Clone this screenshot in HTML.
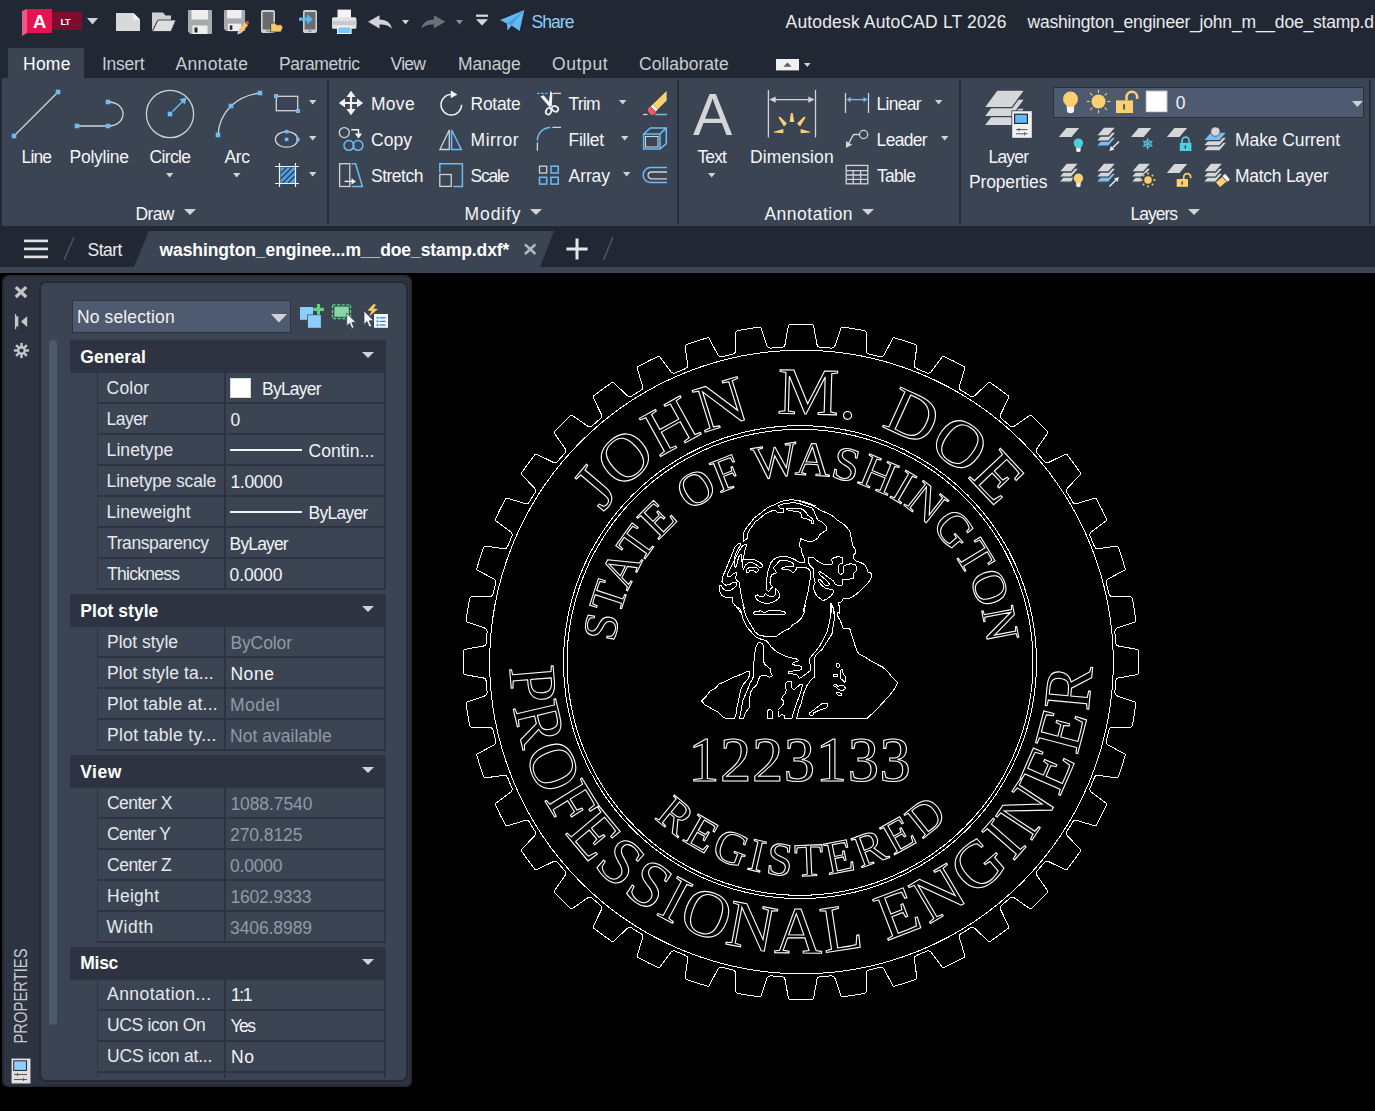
<!DOCTYPE html>
<html lang="en"><head><meta charset="utf-8"><title>Autodesk AutoCAD LT 2026 - washington_engineer_john_m__doe_stamp.dxf</title>
<style>

html,body{margin:0;padding:0;background:#000;}
body{width:1375px;height:1111px;overflow:hidden;font-family:"Liberation Sans",sans-serif;}
#app{position:relative;width:1375px;height:1111px;overflow:hidden;background:#000;}
#app div,#app svg,#app span.t{position:absolute;}
span.t{white-space:pre;line-height:1;}
svg{overflow:visible;}

</style></head>
<body>
<div id="app">
<div style="left:0px;top:0px;width:1375px;height:273px;background:#222833;"></div>
<div style="left:8px;top:48px;width:76px;height:31px;background:#3b4453;"></div>
<div style="left:2px;top:78px;width:1373px;height:148px;background:#3b4453;"></div>
<div style="left:326.5px;top:80px;width:2px;height:144px;background:#272d38;"></div>
<div style="left:676.5px;top:80px;width:2px;height:144px;background:#272d38;"></div>
<div style="left:958.5px;top:80px;width:2px;height:144px;background:#272d38;"></div>
<div style="left:1368.5px;top:80px;width:2px;height:144px;background:#272d38;"></div>
<div style="left:0px;top:267px;width:1375px;height:6px;background:#3b4453;"></div>
<div style="left:1053.4px;top:86.8px;width:309px;height:29px;background:#4e5a6f;border:1.6px solid #2a303b;"></div>
<svg style="left:0px;top:226px;" width="1375" height="41" viewBox="0 0 1375 41"><polygon points="149,5 554,5 540,41 134,41" fill="#3b4453"/><path d="M74,11 L64,34 M613,11 L603.5,34" stroke="#4a5364" stroke-width="1.6" fill="none"/></svg>
<span class="t" style="left:531.60px;top:13.79px;font-size:17.5px;color:#8fcdf8;letter-spacing:-0.971px;">Share</span>
<span class="t" style="left:785.60px;top:13.79px;font-size:17.5px;color:#e9ebee;letter-spacing:0.154px;">Autodesk AutoCAD LT 2026</span>
<span class="t" style="left:1027.54px;top:13.79px;font-size:17.5px;color:#e9ebee;letter-spacing:-0.202px;">washington_engineer_john_m__doe_stamp.d</span>
<span class="t" style="left:23.00px;top:55.79px;font-size:17.5px;color:#ffffff;letter-spacing:0.244px;">Home</span>
<span class="t" style="left:102.00px;top:55.79px;font-size:17.5px;color:#c9cdd4;letter-spacing:-0.255px;">Insert</span>
<span class="t" style="left:175.50px;top:55.79px;font-size:17.5px;color:#c9cdd4;letter-spacing:0.351px;">Annotate</span>
<span class="t" style="left:279.00px;top:55.79px;font-size:17.5px;color:#c9cdd4;letter-spacing:-0.401px;">Parametric</span>
<span class="t" style="left:390.60px;top:55.79px;font-size:17.5px;color:#c9cdd4;letter-spacing:-0.758px;">View</span>
<span class="t" style="left:458.00px;top:55.79px;font-size:17.5px;color:#c9cdd4;letter-spacing:-0.126px;">Manage</span>
<span class="t" style="left:552.00px;top:55.79px;font-size:17.5px;color:#c9cdd4;letter-spacing:0.612px;">Output</span>
<span class="t" style="left:639.00px;top:55.79px;font-size:17.5px;color:#c9cdd4;letter-spacing:0.012px;">Collaborate</span>
<span class="t" style="left:21.60px;top:149.19px;font-size:17.5px;color:#f4f5f7;letter-spacing:-0.891px;">Line</span>
<span class="t" style="left:69.60px;top:149.19px;font-size:17.5px;color:#f4f5f7;letter-spacing:-0.268px;">Polyline</span>
<span class="t" style="left:149.60px;top:149.19px;font-size:17.5px;color:#f4f5f7;letter-spacing:-0.663px;">Circle</span>
<span class="t" style="left:224.40px;top:149.19px;font-size:17.5px;color:#f4f5f7;letter-spacing:-0.325px;">Arc</span>
<span class="t" style="left:697.40px;top:149.19px;font-size:17.5px;color:#f4f5f7;letter-spacing:-0.834px;">Text</span>
<span class="t" style="left:750.00px;top:149.19px;font-size:17.5px;color:#f4f5f7;letter-spacing:0.117px;">Dimension</span>
<span class="t" style="left:988.60px;top:149.19px;font-size:17.5px;color:#f4f5f7;letter-spacing:-0.843px;">Layer</span>
<span class="t" style="left:969.00px;top:174.19px;font-size:17.5px;color:#f4f5f7;letter-spacing:-0.152px;">Properties</span>
<span class="t" style="left:371.00px;top:96.19px;font-size:17.5px;color:#f4f5f7;letter-spacing:0.275px;">Move</span>
<span class="t" style="left:371.00px;top:132.19px;font-size:17.5px;color:#f4f5f7;letter-spacing:0.047px;">Copy</span>
<span class="t" style="left:371.00px;top:168.19px;font-size:17.5px;color:#f4f5f7;letter-spacing:-0.505px;">Stretch</span>
<span class="t" style="left:470.60px;top:96.19px;font-size:17.5px;color:#f4f5f7;letter-spacing:-0.308px;">Rotate</span>
<span class="t" style="left:470.60px;top:132.19px;font-size:17.5px;color:#f4f5f7;letter-spacing:0.464px;">Mirror</span>
<span class="t" style="left:470.60px;top:168.19px;font-size:17.5px;color:#f4f5f7;letter-spacing:-1.240px;">Scale</span>
<span class="t" style="left:568.60px;top:96.19px;font-size:17.5px;color:#f4f5f7;letter-spacing:-0.778px;">Trim</span>
<span class="t" style="left:568.60px;top:132.19px;font-size:17.5px;color:#f4f5f7;letter-spacing:-0.309px;">Fillet</span>
<span class="t" style="left:568.60px;top:168.19px;font-size:17.5px;color:#f4f5f7;letter-spacing:-0.103px;">Array</span>
<span class="t" style="left:876.60px;top:96.19px;font-size:17.5px;color:#f4f5f7;letter-spacing:-0.729px;">Linear</span>
<span class="t" style="left:876.60px;top:132.19px;font-size:17.5px;color:#f4f5f7;letter-spacing:-0.698px;">Leader</span>
<span class="t" style="left:877.00px;top:168.19px;font-size:17.5px;color:#f4f5f7;letter-spacing:-0.706px;">Table</span>
<span class="t" style="left:1235.00px;top:132.19px;font-size:17.5px;color:#f4f5f7;letter-spacing:-0.092px;">Make Current</span>
<span class="t" style="left:1235.00px;top:168.19px;font-size:17.5px;color:#f4f5f7;letter-spacing:-0.269px;">Match Layer</span>
<span class="t" style="left:1175.80px;top:95.19px;font-size:17.5px;color:#f4f5f7;">0</span>
<span class="t" style="left:135.60px;top:205.79px;font-size:17.5px;color:#f4f5f7;letter-spacing:-0.698px;">Draw</span>
<span class="t" style="left:464.60px;top:205.79px;font-size:17.5px;color:#f4f5f7;letter-spacing:0.891px;">Modify</span>
<span class="t" style="left:764.40px;top:205.79px;font-size:17.5px;color:#f4f5f7;letter-spacing:0.504px;">Annotation</span>
<span class="t" style="left:1130.60px;top:205.79px;font-size:17.5px;color:#f4f5f7;letter-spacing:-1.026px;">Layers</span>
<span class="t" style="left:87.60px;top:242.19px;font-size:17.5px;color:#e9ebee;letter-spacing:-0.541px;">Start</span>
<span class="t" style="left:159.49px;top:242.19px;font-size:17.5px;color:#ffffff;letter-spacing:-0.084px;font-weight:700;">washington_enginee...m__doe_stamp.dxf*</span>
<svg style="left:87.0px;top:17.8px;" width="11" height="6.4" viewBox="0 0 11 6.4"><polygon points="0,0 11,0 5.5,6.4" fill="#d0d2d6"/></svg>
<svg style="left:166.4px;top:173.0px;" width="7.4" height="4.6" viewBox="0 0 7.4 4.6"><polygon points="0,0 7.4,0 3.7,4.6" fill="#d0d2d6"/></svg>
<svg style="left:233.3px;top:173.0px;" width="7.4" height="4.6" viewBox="0 0 7.4 4.6"><polygon points="0,0 7.4,0 3.7,4.6" fill="#d0d2d6"/></svg>
<svg style="left:708.0999999999999px;top:173.2px;" width="7.4" height="4.6" viewBox="0 0 7.4 4.6"><polygon points="0,0 7.4,0 3.7,4.6" fill="#d0d2d6"/></svg>
<svg style="left:309.0px;top:99.7px;" width="7.4" height="4.6" viewBox="0 0 7.4 4.6"><polygon points="0,0 7.4,0 3.7,4.6" fill="#d0d2d6"/></svg>
<svg style="left:309.0px;top:135.7px;" width="7.4" height="4.6" viewBox="0 0 7.4 4.6"><polygon points="0,0 7.4,0 3.7,4.6" fill="#d0d2d6"/></svg>
<svg style="left:309.0px;top:171.7px;" width="7.4" height="4.6" viewBox="0 0 7.4 4.6"><polygon points="0,0 7.4,0 3.7,4.6" fill="#d0d2d6"/></svg>
<svg style="left:619.0px;top:99.7px;" width="7.4" height="4.6" viewBox="0 0 7.4 4.6"><polygon points="0,0 7.4,0 3.7,4.6" fill="#d0d2d6"/></svg>
<svg style="left:621.0px;top:135.7px;" width="7.4" height="4.6" viewBox="0 0 7.4 4.6"><polygon points="0,0 7.4,0 3.7,4.6" fill="#d0d2d6"/></svg>
<svg style="left:623.0px;top:171.7px;" width="7.4" height="4.6" viewBox="0 0 7.4 4.6"><polygon points="0,0 7.4,0 3.7,4.6" fill="#d0d2d6"/></svg>
<svg style="left:935.0px;top:99.7px;" width="7.4" height="4.6" viewBox="0 0 7.4 4.6"><polygon points="0,0 7.4,0 3.7,4.6" fill="#d0d2d6"/></svg>
<svg style="left:941.0px;top:135.7px;" width="7.4" height="4.6" viewBox="0 0 7.4 4.6"><polygon points="0,0 7.4,0 3.7,4.6" fill="#d0d2d6"/></svg>
<svg style="left:184.0px;top:209.0px;" width="12" height="6" viewBox="0 0 12 6"><polygon points="0,0 12,0 6.0,6" fill="#d0d2d6"/></svg>
<svg style="left:530.3px;top:209.0px;" width="12" height="6" viewBox="0 0 12 6"><polygon points="0,0 12,0 6.0,6" fill="#d0d2d6"/></svg>
<svg style="left:862.2px;top:209.0px;" width="12" height="6" viewBox="0 0 12 6"><polygon points="0,0 12,0 6.0,6" fill="#d0d2d6"/></svg>
<svg style="left:1188.0px;top:209.0px;" width="12" height="6" viewBox="0 0 12 6"><polygon points="0,0 12,0 6.0,6" fill="#d0d2d6"/></svg>
<svg style="left:1351.6px;top:101.0px;" width="10.8" height="6" viewBox="0 0 10.8 6"><polygon points="0,0 10.8,0 5.4,6" fill="#d0d2d6"/></svg>
<svg style="left:402.4px;top:20.0px;" width="7" height="4.4" viewBox="0 0 7 4.4"><polygon points="0,0 7,0 3.5,4.4" fill="#d0d2d6"/></svg>
<svg style="left:456.2px;top:20.0px;" width="7" height="4.4" viewBox="0 0 7 4.4"><polygon points="0,0 7,0 3.5,4.4" fill="#8b8f98"/></svg>
<svg style="left:804.4000000000001px;top:63.0px;" width="6.6" height="4" viewBox="0 0 6.6 4"><polygon points="0,0 6.6,0 3.3,4" fill="#d0d2d6"/></svg>
<svg style="left:0px;top:0px;" width="1375" height="275" viewBox="0 0 1375 275"><polygon points="22,11 27,9 27,33 22,36" fill="#ea5a86"/><rect x="27" y="9" width="25" height="24" fill="#e5134f"/><rect x="52" y="12" width="30" height="18" fill="#7d0d2e"/><polygon points="116,13 133.5,13 140,19.5 140,31 116,31" fill="#d9d9d9"/><polygon points="133.5,13 140,19.5 133.5,19.5" fill="#f4f4f4"/><polygon points="152,12.5 163,12.5 165.5,15.5 171,15.5 171,21 157,21 152,31.5" fill="#cfcfcf"/><polygon points="158,20 176,20 171,31.5 152.3,31.5" fill="#dedede" stroke="#222833" stroke-width="0.8"/><g transform="translate(188,10) scale(1.0)"><path d="M0,1 Q0,0 1,0 H23 Q24,0 24,1 V23 Q24,24 23,24 H2.5 L0,21.5 Z" fill="#a9aaad"/><rect x="3.5" y="0" width="16.5" height="9.5" fill="#efefef"/><rect x="4.5" y="15.5" width="15" height="8.5" fill="#efefef"/><rect x="6.5" y="17.5" width="3" height="5" fill="#25272c"/></g><g transform="translate(224,10) scale(0.88)"><path d="M0,1 Q0,0 1,0 H23 Q24,0 24,1 V23 Q24,24 23,24 H2.5 L0,21.5 Z" fill="#a9aaad"/><rect x="3.5" y="0" width="16.5" height="9.5" fill="#efefef"/><rect x="4.5" y="15.5" width="15" height="8.5" fill="#efefef"/><rect x="6.5" y="17.5" width="3" height="5" fill="#25272c"/></g><g transform="translate(236,21)"><polygon points="2.5,9.5 9,1.5 12,4.2 5.6,12" fill="#f4c56a"/><polygon points="9,1.5 10.3,0.3 12.3,0 13,1.6 12,4.2" fill="#e5484d"/><polygon points="2.5,9.5 5.6,12 1,13.6" fill="#d9d9d9"/></g><rect x="261" y="10" width="14" height="23" rx="2" fill="#cfcfd1"/><rect x="262.6" y="12" width="10.8" height="17.5" fill="#6a6b6e"/><rect x="266.5" y="30.6" width="3" height="1" fill="#6a6b6e"/><polygon points="270.6,23 275,23 276.5,24.8 282,24.8 282,26.5 283.3,26.5 281,32 270.6,32" fill="#f4c76b" stroke="#222833" stroke-width="0.7"/><rect x="303" y="10" width="14" height="23" rx="2" fill="#cfcfd1"/><rect x="304.6" y="12" width="10.8" height="17.5" fill="#6a6b6e"/><rect x="308.5" y="30.6" width="3" height="1" fill="#6a6b6e"/><path d="M299,17.6 H307 V14.2 L313,19.2 L307,24.2 V20.8 H299 Z" fill="#56b5f2"/><rect x="337.5" y="9.6" width="13.5" height="9" fill="#f4f4f4"/><rect x="332" y="17.2" width="24.4" height="11.6" rx="1.5" fill="#e2e2e3"/><rect x="332" y="21" width="24.4" height="4" fill="#c9c9cb"/><rect x="337" y="26.2" width="14.6" height="7.8" fill="#f4f4f4"/><rect x="338.2" y="27.4" width="12.2" height="5.6" fill="#7cc6f6"/><path d="M368,21.8 L379.5,15.2 V19.6 C386.5,19.6 391.2,23.4 392,29 C389.6,26 385.6,24.6 379.5,24.6 V28.6 Z" fill="#d2d3d6"/><path d="M445.4,21.8 L433.9,15.2 V19.6 C426.9,19.6 422.2,23.4 421.4,29 C423.8,26 427.8,24.6 433.9,24.6 V28.6 Z" fill="#6c7079"/><rect x="476" y="14.6" width="12" height="2.2" fill="#d8d9db"/><polygon points="476,19.2 488,19.2 482,25.6" fill="#d8d9db"/><polygon points="500,20 524.3,10 519.6,31 511.6,25.4 507.6,30.6 506.8,23.6" fill="#63b9f3"/><path d="M506.8,23.6 L524.3,10 L511.6,25.4" fill="#4b9fde"/><rect x="776" y="59" width="23" height="11.4" fill="#f0f0f0"/><polygon points="783.4,66.8 791.6,66.8 787.5,62.4" fill="#5a5d63"/><rect x="24" y="239.6" width="24" height="2.6" fill="#e2e3e5"/><rect x="24" y="247.6" width="24" height="2.6" fill="#e2e3e5"/><rect x="24" y="255.59999999999997" width="24" height="2.6" fill="#e2e3e5"/><path d="M525,244.4 L535.4,254 M535.4,244.4 L525,254" stroke="#b4b7bd" stroke-width="2.6" fill="none"/><path d="M566.4,249 H587.6 M577,238.6 V259.4" stroke="#e6e7e9" stroke-width="3" fill="none"/><path d="M14,136 L58,92" stroke="#d2d3d6" stroke-width="1.3" fill="none"/><rect x="11.7" y="133.7" width="4.6" height="4.6" fill="#6cbcf3"/><rect x="55.7" y="89.7" width="4.6" height="4.6" fill="#6cbcf3"/><path d="M77,126 H108 C128,126 128,102 108,102" stroke="#d2d3d6" stroke-width="1.3" fill="none"/><rect x="74.7" y="123.7" width="4.6" height="4.6" fill="#6cbcf3"/><rect x="105.7" y="123.7" width="4.6" height="4.6" fill="#6cbcf3"/><rect x="105.7" y="99.7" width="4.6" height="4.6" fill="#6cbcf3"/><circle cx="170" cy="114" r="23.6" stroke="#d2d3d6" stroke-width="1.3" fill="none"/><rect x="167.7" y="111.7" width="4.6" height="4.6" fill="#6cbcf3"/><path d="M172.5,111.5 L183,101" stroke="#6cbcf3" stroke-width="1.5"/><polygon points="186.6,97.4 184.8,104.6 179.4,99.2" fill="#6cbcf3"/><path d="M218,135 C219.5,112 236,96 260,93" stroke="#d2d3d6" stroke-width="1.3" fill="none"/><rect x="215.7" y="132.7" width="4.6" height="4.6" fill="#6cbcf3"/><rect x="228.7" y="103.7" width="4.6" height="4.6" fill="#6cbcf3"/><rect x="257.7" y="90.7" width="4.6" height="4.6" fill="#6cbcf3"/><rect x="276.3" y="96.3" width="21.4" height="14.4" stroke="#d2d3d6" stroke-width="1.3" fill="none"/><rect x="274.0" y="94.0" width="4" height="4" fill="#6cbcf3"/><rect x="296.0" y="109.0" width="4" height="4" fill="#6cbcf3"/><ellipse cx="286.6" cy="139.4" rx="11.2" ry="7.8" stroke="#d2d3d6" stroke-width="1.3" fill="none"/><rect x="284.8" y="129.8" width="3.6" height="3.6" fill="#6cbcf3"/><rect x="284.8" y="137.6" width="3.6" height="3.6" fill="#6cbcf3"/><rect x="296.0" y="137.6" width="3.6" height="3.6" fill="#6cbcf3"/><rect x="280.5" y="167.5" width="14.5" height="15.5" fill="#4f9fe0"/><path d="M280.5,173.5 L286.5,167.5 M280.5,179 L292,167.5 M282.5,183 L295,170.5 M288,183 L295,176" stroke="#2b3950" stroke-width="1.1"/><path d="M279.5,163 V187 M295.5,163 V187 M275,166.5 H299 M275,183.5 H299" stroke="#f2f2f2" stroke-width="1.2" fill="none"/><path d="M351,94 V112 M342,103 H360" stroke="#f2f2f2" stroke-width="2.2" fill="none"/><polygon points="351,90.8 355.6,97 346.4,97" fill="#f2f2f2"/><polygon points="351,115.2 355.6,109 346.4,109" fill="#f2f2f2"/><polygon points="338.8,103 345,98.4 345,107.6" fill="#f2f2f2"/><polygon points="363.2,103 357,98.4 357,107.6" fill="#f2f2f2"/><circle cx="344.3" cy="132.6" r="5" stroke="#d2d3d6" stroke-width="1.3" fill="none"/><circle cx="348.9" cy="145.4" r="4.9" stroke="#6cbcf3" stroke-width="1.5" fill="none"/><circle cx="358" cy="145.4" r="4.9" stroke="#6cbcf3" stroke-width="1.5" fill="none"/><path d="M351.2,129.7 H358.5 V134" stroke="#f2f2f2" stroke-width="1.4" fill="none"/><polygon points="354.8,133.4 362.2,133.4 358.5,138.6" fill="#f2f2f2"/><rect x="339.6" y="163.7" width="10.2" height="22.8" stroke="#d2d3d6" stroke-width="1.3" fill="none"/><path d="M351.5,163.7 H355.6 L362.4,186.5 H351.5" stroke="#6cbcf3" stroke-width="1.5" fill="none"/><path d="M344.6,181.4 H352.5" stroke="#f2f2f2" stroke-width="1.4" fill="none"/><polygon points="351.6,178.2 356,181.4 351.6,184.6" fill="#f2f2f2"/><path d="M461.6,104.7 A10.3,10.3 0 1 1 451.3,94.4" stroke="#f2f2f2" stroke-width="1.4" fill="none"/><polygon points="450.8,90.6 457.4,94.4 450.8,98.2" fill="#f2f2f2"/><polygon points="439.9,149.5 449.3,149.5 449.3,130" stroke="#d2d3d6" stroke-width="1.3" fill="none"/><polygon points="451.6,130 451.6,149.5 461.3,149.5" stroke="#6cbcf3" stroke-width="1.5" fill="none"/><path d="M439.8,172.4 V163.8 H462.4 V186.4 H453.3" stroke="#6cbcf3" stroke-width="1.5" fill="none"/><rect x="439.8" y="174.5" width="11.4" height="11.9" stroke="#d2d3d6" stroke-width="1.3" fill="none"/><path d="M537,93.4 H548.6" stroke="#6cbcf3" stroke-width="1.3" stroke-dasharray="2.6,1.4"/><path d="M553,93.4 H561" stroke="#d2d3d6" stroke-width="1.3" fill="none"/><polygon points="540.4,96.6 543.6,95.2 552.2,105.6 549.6,107.2" fill="#f2f2f2"/><polygon points="550.4,90.8 552.4,93 551.8,105 548.4,105" fill="#f2f2f2"/><ellipse cx="548.6" cy="111.2" rx="2.6" ry="3.4" transform="rotate(25 548.6 111.2)" stroke="#f2f2f2" stroke-width="1.7" fill="none"/><ellipse cx="555" cy="108.8" rx="2.6" ry="3.4" transform="rotate(-60 555 108.8)" stroke="#f2f2f2" stroke-width="1.7" fill="none"/><path d="M537.4,140.6 A13.2,13.2 0 0 1 550.4,127.4" stroke="#6cbcf3" stroke-width="1.5" fill="none"/><path d="M552.4,127.4 H561 M537.4,142.6 V150.8" stroke="#d2d3d6" stroke-width="1.3" fill="none"/><rect x="539.5" y="166.2" width="7.2" height="6.8" stroke="#d2d3d6" stroke-width="1.3" fill="none"/><rect x="551" y="166.2" width="7.2" height="6.8" stroke="#6cbcf3" stroke-width="1.5" fill="none"/><rect x="539.5" y="177.3" width="7.2" height="6.8" stroke="#6cbcf3" stroke-width="1.5" fill="none"/><rect x="551" y="177.3" width="7.2" height="6.8" stroke="#6cbcf3" stroke-width="1.5" fill="none"/><polygon points="666.6,91 666.6,100.6 657.6,109.6 652.6,104.6" fill="#fbd070"/><polygon points="652.6,104.6 657.6,109.6 655.8,111.4 650.8,106.4" fill="#ffffff"/><path d="M650.8,106.4 L655.8,111.4 A3.5,3.5 0 0 1 649,112.6 A3.5,3.5 0 0 1 650.8,106.4 Z" fill="#f05a63"/><path d="M643,114.5 H647.6" stroke="#d2d3d6" stroke-width="1.3" fill="none"/><path d="M655.4,114.5 H667" stroke="#6cbcf3" stroke-width="1.5" fill="none"/><path d="M643.6,149 V134 L650.4,127.9 H666.3 V143.6 L660,149 Z M643.6,134 H660 V149 M660,134 L666.3,127.9" stroke="#6cbcf3" stroke-width="1.5" fill="none"/><rect x="645.5" y="136.5" width="12.5" height="10.5" stroke="#d2d3d6" stroke-width="1.1" fill="none"/><path d="M667,167.5 H650.6 A7.5,7.5 0 0 0 650.6,182.5 H667" stroke="#6cbcf3" stroke-width="1.5" fill="none"/><path d="M667,172 H651.5 A3.4,3.4 0 0 0 651.5,178.8 H667" stroke="#d2d3d6" stroke-width="1.3" fill="none"/><path d="M768.4,90 V137.6 M815.5,90 V137.6 M773,99.6 H811" stroke="#d2d3d6" stroke-width="1.3" fill="none"/><polygon points="769.4,99.6 775.6,96.4 775.6,102.8" fill="#d2d3d6"/><polygon points="814.5,99.6 808.3,96.4 808.3,102.8" fill="#d2d3d6"/><polygon points="790.9,113 792.7,113 794.2,122 789.6,122" fill="#fbd070"/><polygon points="778.4,117.6 779.8,116.6 787,123.4 784,126.4" fill="#fbd070"/><polygon points="805.6,117.6 804.2,116.6 797,123.4 800,126.4" fill="#fbd070"/><polygon points="773.8,131.8 783.4,129 783.4,133.2 773.8,132.6" fill="#fbd070"/><polygon points="810.2,131.8 800.6,129 800.6,133.2 810.2,132.6" fill="#fbd070"/><path d="M845.5,93 V113 M868.5,93 V113" stroke="#d2d3d6" stroke-width="1.3" fill="none"/><path d="M849,99.6 H865" stroke="#6cbcf3" stroke-width="1.3"/><polygon points="846.4,99.6 850.6,97 850.6,102.2" fill="#6cbcf3"/><polygon points="867.6,99.6 863.4,97 863.4,102.2" fill="#6cbcf3"/><circle cx="863.6" cy="134.5" r="4.1" stroke="#d2d3d6" stroke-width="1.3" fill="none"/><path d="M859.4,134.5 H853.6 L849,142.6" stroke="#d2d3d6" stroke-width="1.3" fill="none"/><polygon points="845.8,148 846.2,141 852.2,144.8" fill="#d2d3d6"/><rect x="846.2" y="165.4" width="21.6" height="18.4" stroke="#d2d3d6" stroke-width="1.3" fill="none"/><path d="M846.2,170.6 H867.8 M846.2,175 H867.8 M846.2,179.4 H867.8 M853.2,170.6 V183.8 M860.6,170.6 V183.8" stroke="#d2d3d6" stroke-width="1.3" fill="none"/><polygon points="997.0,108.0 1025.0,108.0 1012.0,125.6 984.0,125.6" fill="#d6d7d9" stroke="#3b4453" stroke-width="1.3"/><polygon points="997.0,99.0 1025.0,99.0 1012.0,116.6 984.0,116.6" fill="#d6d7d9" stroke="#3b4453" stroke-width="1.3"/><polygon points="997.0,90.0 1025.0,90.0 1012.0,107.6 984.0,107.6" fill="#d6d7d9" stroke="#3b4453" stroke-width="1.3"/><rect x="1011.4" y="110.4" width="21.2" height="28.2" fill="#3b4453"/><rect x="1012.2" y="111.2" width="19.6" height="26.6" fill="#f1f1f1"/><rect x="1014" y="113.6" width="14" height="10.4" fill="#252a34"/><rect x="1015.2" y="114.8" width="11.6" height="8" fill="#63b9f3"/><path d="M1016,129.6 H1027.6 M1016,133.8 H1027.6 M1019,128 V131.2 M1024.6,132.2 V135.4" stroke="#55585e" stroke-width="1"/><circle cx="1070.5" cy="99" r="7.5" fill="#fbd070"/><path d="M1066.9,106.1 H1074.1 V110.6 Q1074.1,113.2 1070.5,113.2 Q1066.9,113.2 1066.9,110.6 Z" fill="#f4f4f4"/><rect x="1066.5" y="104.4" width="7.9" height="2.6" fill="#fbd070"/><circle cx="1098.5" cy="101.5" r="7" fill="#fbd070"/><path d="M1107.3,101.5 L1110.3,101.5" stroke="#fbd070" stroke-width="1.1"/><path d="M1104.7,107.7 L1106.8,109.8" stroke="#fbd070" stroke-width="1.1"/><path d="M1098.5,110.3 L1098.5,113.3" stroke="#fbd070" stroke-width="1.1"/><path d="M1092.3,107.7 L1090.2,109.8" stroke="#fbd070" stroke-width="1.1"/><path d="M1089.7,101.5 L1086.7,101.5" stroke="#fbd070" stroke-width="1.1"/><path d="M1092.3,95.3 L1090.2,93.2" stroke="#fbd070" stroke-width="1.1"/><path d="M1098.5,92.7 L1098.5,89.7" stroke="#fbd070" stroke-width="1.1"/><path d="M1104.7,95.3 L1106.8,93.2" stroke="#fbd070" stroke-width="1.1"/><rect x="1116" y="100.4" width="17" height="12.6" fill="#fbd070"/><rect x="1123.1" y="104.2" width="2.0" height="5.3" fill="#4e5a6f"/><path d="M1126.5,100.4 V97.1 A5.3,5.3 0 0 1 1137.1,97.1 V99.1" stroke="#fbd070" stroke-width="2.5" fill="none"/><rect x="1146.4" y="91.2" width="20.4" height="20.4" fill="#ffffff" stroke="#dcdcdc" stroke-width="1.2"/><polygon points="1066.4,128.0 1079.1,128.0 1071.5,136.9 1058.8,136.9" fill="#d6d7d9" /><circle cx="1078.4" cy="143.1" r="4.7" fill="#4fcfe0"/><path d="M1076.2,147.6 H1080.6 V150.4 Q1080.6,152.0 1078.4,152.0 Q1076.2,152.0 1076.2,150.4 Z" fill="#f4f4f4"/><rect x="1075.8" y="146.5" width="5.3" height="1.6" fill="#4fcfe0"/><polygon points="1103.7,137.2 1116.3,137.2 1108.6,146.2 1096.0,146.2" fill="#78bff0" stroke="#3b4453" stroke-width="1.3"/><polygon points="1103.7,132.1 1116.3,132.1 1108.6,141.1 1096.0,141.1" fill="#d6d7d9" stroke="#3b4453" stroke-width="1.3"/><polygon points="1103.7,127.0 1116.3,127.0 1108.6,136.0 1096.0,136.0" fill="#d6d7d9" stroke="#3b4453" stroke-width="1.3"/><path d="M1119.0,141.4 L1112.7,147.7" stroke="#f2f2f2" stroke-width="1.4"/><polygon points="1109.4,151.0 1110.9,146.0 1114.4,149.5" fill="#f2f2f2"/><polygon points="1138.6,128.0 1151.3,128.0 1143.7,136.9 1131.0,136.9" fill="#d6d7d9" /><circle cx="1147.7" cy="143.8" r="3.5" stroke="#4fcfe0" stroke-width="1" fill="none"/><path d="M1147.7,138.2 L1147.7,149.4" stroke="#4fcfe0" stroke-width="1.1"/><path d="M1152.5,141.0 L1142.9,146.6" stroke="#4fcfe0" stroke-width="1.1"/><path d="M1152.5,146.6 L1142.9,141.0" stroke="#4fcfe0" stroke-width="1.1"/><polygon points="1174.4,128.0 1187.1,128.0 1179.5,136.9 1166.8,136.9" fill="#d6d7d9" /><rect x="1179.8" y="142.8" width="11.6" height="8.2" fill="#4fcfe0"/><rect x="1184.7" y="145.3" width="1.4" height="3.4" fill="#3b4453"/><path d="M1182.1,142.8 V140.7 A3.5,3.5 0 0 1 1189.1,140.7 V142.8" stroke="#4fcfe0" stroke-width="1.7" fill="none"/><polygon points="1210.6,142.2 1227.3,142.2 1219.7,150.9 1203.0,150.9" fill="#d6d7d9" stroke="#3b4453" stroke-width="1.3"/><polygon points="1210.6,137.1 1227.3,137.1 1219.7,145.8 1203.0,145.8" fill="#d6d7d9" stroke="#3b4453" stroke-width="1.3"/><polygon points="1210.6,132.0 1227.3,132.0 1219.7,140.7 1203.0,140.7" fill="#78bff0" stroke="#3b4453" stroke-width="1.3"/><circle cx="1215.4" cy="131.6" r="4.7" fill="#d6d7d9" stroke="#3b4453" stroke-width="0.8"/><polygon points="1066.5,173.2 1079.1,173.2 1071.4,182.2 1058.8,182.2" fill="#d6d7d9" stroke="#3b4453" stroke-width="1.3"/><polygon points="1066.5,168.1 1079.1,168.1 1071.4,177.1 1058.8,177.1" fill="#d6d7d9" stroke="#3b4453" stroke-width="1.3"/><polygon points="1066.5,163.0 1079.1,163.0 1071.4,172.0 1058.8,172.0" fill="#d6d7d9" stroke="#3b4453" stroke-width="1.3"/><circle cx="1078.4" cy="178.3" r="6" fill="#3b4453"/><circle cx="1078.4" cy="178.3" r="4.7" fill="#fbd070"/><path d="M1076.2,182.8 H1080.6 V185.6 Q1080.6,187.2 1078.4,187.2 Q1076.2,187.2 1076.2,185.6 Z" fill="#f4f4f4"/><rect x="1075.8" y="181.7" width="5.3" height="1.6" fill="#fbd070"/><polygon points="1103.7,173.2 1116.3,173.2 1108.6,182.2 1096.0,182.2" fill="#78bff0" stroke="#3b4453" stroke-width="1.3"/><polygon points="1103.7,168.1 1116.3,168.1 1108.6,177.1 1096.0,177.1" fill="#d6d7d9" stroke="#3b4453" stroke-width="1.3"/><polygon points="1103.7,163.0 1116.3,163.0 1108.6,172.0 1096.0,172.0" fill="#d6d7d9" stroke="#3b4453" stroke-width="1.3"/><path d="M1109.4,186.6 L1115.7,180.3" stroke="#f2f2f2" stroke-width="1.4"/><polygon points="1119.0,177.0 1117.5,182.0 1114.0,178.5" fill="#f2f2f2"/><polygon points="1138.7,173.2 1151.3,173.2 1143.6,182.2 1131.0,182.2" fill="#d6d7d9" stroke="#3b4453" stroke-width="1.3"/><polygon points="1138.7,168.1 1151.3,168.1 1143.6,177.1 1131.0,177.1" fill="#d6d7d9" stroke="#3b4453" stroke-width="1.3"/><polygon points="1138.7,163.0 1151.3,163.0 1143.6,172.0 1131.0,172.0" fill="#d6d7d9" stroke="#3b4453" stroke-width="1.3"/><circle cx="1148" cy="180" r="7.4" fill="#3b4453"/><circle cx="1148" cy="180" r="3.7" fill="#fbd070"/><rect x="1153.5" y="179.1" width="1.8" height="1.8" fill="#fbd070"/><rect x="1151.6" y="183.6" width="1.8" height="1.8" fill="#fbd070"/><rect x="1147.1" y="185.5" width="1.8" height="1.8" fill="#fbd070"/><rect x="1142.6" y="183.6" width="1.8" height="1.8" fill="#fbd070"/><rect x="1140.7" y="179.1" width="1.8" height="1.8" fill="#fbd070"/><rect x="1142.6" y="174.6" width="1.8" height="1.8" fill="#fbd070"/><rect x="1147.1" y="172.7" width="1.8" height="1.8" fill="#fbd070"/><rect x="1151.6" y="174.6" width="1.8" height="1.8" fill="#fbd070"/><polygon points="1174.4,164.0 1187.1,164.0 1179.5,172.9 1166.8,172.9" fill="#d6d7d9" /><rect x="1176.7" y="179" width="11.3" height="7.8" fill="#fbd070"/><rect x="1181.4" y="181.3" width="1.4" height="3.3" fill="#3b4453"/><path d="M1183.7,179.0 V177.2 A3.5,3.5 0 0 1 1190.7,177.2 V178.2" stroke="#fbd070" stroke-width="1.7" fill="none"/><polygon points="1210.7,173.2 1223.3,173.2 1215.6,182.2 1203.0,182.2" fill="#d6d7d9" stroke="#3b4453" stroke-width="1.3"/><polygon points="1210.7,168.1 1223.3,168.1 1215.6,177.1 1203.0,177.1" fill="#d6d7d9" stroke="#3b4453" stroke-width="1.3"/><polygon points="1210.7,163.0 1223.3,163.0 1215.6,172.0 1203.0,172.0" fill="#d6d7d9" stroke="#3b4453" stroke-width="1.3"/><g transform="rotate(-40 1221 182)"><rect x="1216.6" y="178.6" width="9" height="7" fill="#fbd070" stroke="#3b4453" stroke-width="0.8"/><rect x="1226" y="178.4" width="3.4" height="7.4" fill="#ffffff"/></g></svg>
<span class="t" style="left:33.00px;top:12.62px;font-size:18.4px;color:#ffffff;font-weight:700;">A</span>
<span class="t" style="left:60.60px;top:17.04px;font-size:9.4px;color:#ffffff;letter-spacing:-0.958px;font-weight:700;">LT</span>
<span class="t" style="left:693.00px;top:86.23px;font-size:58.8px;color:#d4d5d7;">A</span>
<div style="left:2px;top:275px;width:406px;height:808px;background:#2d3340;border:2px solid #252a34;border-radius:7px 7px 6px 6px;"></div>
<div style="left:38.7px;top:281px;width:365px;height:797px;background:#3b4453;border:2px solid #252a34;border-radius:7px;"></div>
<div style="left:71.5px;top:300px;width:217px;height:30.5px;background:#4e5a6f;border:1px solid #2c323e;"></div>
<span class="t" style="left:77.00px;top:309.19px;font-size:17.5px;color:#f0f1f3;letter-spacing:0.119px;">No selection</span>
<svg style="left:271px;top:314px;" width="16" height="8.4" viewBox="0 0 16 8.4"><polygon points="0,0 16,0 8,8.4" fill="#d0d2d6"/></svg>
<div style="left:49px;top:340px;width:7.6px;height:685px;background:#4e596d;border-radius:4px;"></div>
<div style="left:70px;top:340px;width:316px;height:33px;background:#2d3340;"></div>
<span class="t" style="left:80.30px;top:348.69px;font-size:17.5px;color:#ffffff;letter-spacing:0.070px;font-weight:700;">General</span>
<svg style="left:362px;top:352px;" width="12" height="6" viewBox="0 0 12 6"><polygon points="0,0 12,0 6,6" fill="#d0d2d6"/></svg>
<div style="left:96.5px;top:373px;width:289.5px;height:216.7px;background:#2d3340;"></div>
<div style="left:98.3px;top:373px;width:125.7px;height:29px;background:#3b4453;"></div>
<div style="left:226px;top:373px;width:158.3px;height:29px;background:#3b4453;"></div>
<span class="t" style="left:106.60px;top:379.79px;font-size:17.5px;color:#e6e8ec;letter-spacing:0.195px;">Color</span>
<span class="t" style="left:262.00px;top:380.79px;font-size:17.5px;color:#f2f3f5;letter-spacing:-0.766px;">ByLayer</span>
<div style="left:98.3px;top:404px;width:125.7px;height:29px;background:#3b4453;"></div>
<div style="left:226px;top:404px;width:158.3px;height:29px;background:#3b4453;"></div>
<span class="t" style="left:106.60px;top:410.79px;font-size:17.5px;color:#e6e8ec;letter-spacing:-0.543px;">Layer</span>
<span class="t" style="left:230.40px;top:411.79px;font-size:17.5px;color:#f2f3f5;">0</span>
<div style="left:98.3px;top:435px;width:125.7px;height:29px;background:#3b4453;"></div>
<div style="left:226px;top:435px;width:158.3px;height:29px;background:#3b4453;"></div>
<span class="t" style="left:106.60px;top:441.79px;font-size:17.5px;color:#e6e8ec;letter-spacing:0.064px;">Linetype</span>
<span class="t" style="left:308.40px;top:442.79px;font-size:17.5px;color:#f2f3f5;letter-spacing:0.102px;">Contin...</span>
<div style="left:98.3px;top:466px;width:125.7px;height:29px;background:#3b4453;"></div>
<div style="left:226px;top:466px;width:158.3px;height:29px;background:#3b4453;"></div>
<span class="t" style="left:106.60px;top:472.79px;font-size:17.5px;color:#e6e8ec;letter-spacing:-0.175px;">Linetype scale</span>
<span class="t" style="left:230.40px;top:473.79px;font-size:17.5px;color:#f2f3f5;letter-spacing:-0.302px;">1.0000</span>
<div style="left:98.3px;top:497px;width:125.7px;height:29px;background:#3b4453;"></div>
<div style="left:226px;top:497px;width:158.3px;height:29px;background:#3b4453;"></div>
<span class="t" style="left:106.60px;top:503.79px;font-size:17.5px;color:#e6e8ec;letter-spacing:0.037px;">Lineweight</span>
<span class="t" style="left:308.60px;top:504.79px;font-size:17.5px;color:#f2f3f5;letter-spacing:-0.766px;">ByLayer</span>
<div style="left:98.3px;top:528px;width:125.7px;height:29px;background:#3b4453;"></div>
<div style="left:226px;top:528px;width:158.3px;height:29px;background:#3b4453;"></div>
<span class="t" style="left:107.00px;top:534.79px;font-size:17.5px;color:#e6e8ec;letter-spacing:-0.395px;">Transparency</span>
<span class="t" style="left:229.60px;top:535.79px;font-size:17.5px;color:#f2f3f5;letter-spacing:-0.866px;">ByLayer</span>
<div style="left:98.3px;top:559px;width:125.7px;height:29px;background:#3b4453;"></div>
<div style="left:226px;top:559px;width:158.3px;height:29px;background:#3b4453;"></div>
<span class="t" style="left:107.00px;top:565.79px;font-size:17.5px;color:#e6e8ec;letter-spacing:-0.723px;">Thickness</span>
<span class="t" style="left:229.60px;top:566.79px;font-size:17.5px;color:#f2f3f5;letter-spacing:-0.142px;">0.0000</span>
<div style="left:70px;top:594px;width:316px;height:33px;background:#2d3340;"></div>
<span class="t" style="left:80.30px;top:602.69px;font-size:17.5px;color:#ffffff;letter-spacing:0.023px;font-weight:700;">Plot style</span>
<svg style="left:362px;top:606px;" width="12" height="6" viewBox="0 0 12 6"><polygon points="0,0 12,0 6,6" fill="#d0d2d6"/></svg>
<div style="left:96.5px;top:627px;width:289.5px;height:123.7px;background:#2d3340;"></div>
<div style="left:98.3px;top:627px;width:125.7px;height:29px;background:#3b4453;"></div>
<div style="left:226px;top:627px;width:158.3px;height:29px;background:#3b4453;"></div>
<span class="t" style="left:107.00px;top:633.79px;font-size:17.5px;color:#e6e8ec;">Plot style</span>
<span class="t" style="left:230.40px;top:634.79px;font-size:17.5px;color:#9299a5;letter-spacing:-0.107px;">ByColor</span>
<div style="left:98.3px;top:658px;width:125.7px;height:29px;background:#3b4453;"></div>
<div style="left:226px;top:658px;width:158.3px;height:29px;background:#3b4453;"></div>
<span class="t" style="left:107.00px;top:664.79px;font-size:17.5px;color:#e6e8ec;letter-spacing:0.104px;">Plot style ta...</span>
<span class="t" style="left:230.40px;top:665.79px;font-size:17.5px;color:#f2f3f5;letter-spacing:0.592px;">None</span>
<div style="left:98.3px;top:689px;width:125.7px;height:29px;background:#3b4453;"></div>
<div style="left:226px;top:689px;width:158.3px;height:29px;background:#3b4453;"></div>
<span class="t" style="left:107.00px;top:695.79px;font-size:17.5px;color:#e6e8ec;letter-spacing:0.239px;">Plot table at...</span>
<span class="t" style="left:230.00px;top:696.79px;font-size:17.5px;color:#9299a5;letter-spacing:0.481px;">Model</span>
<div style="left:98.3px;top:720px;width:125.7px;height:29px;background:#3b4453;"></div>
<div style="left:226px;top:720px;width:158.3px;height:29px;background:#3b4453;"></div>
<span class="t" style="left:107.00px;top:726.79px;font-size:17.5px;color:#e6e8ec;letter-spacing:0.311px;">Plot table ty...</span>
<span class="t" style="left:230.00px;top:727.79px;font-size:17.5px;color:#9299a5;letter-spacing:0.037px;">Not available</span>
<div style="left:70px;top:755px;width:316px;height:33px;background:#2d3340;"></div>
<span class="t" style="left:80.30px;top:763.69px;font-size:17.5px;color:#ffffff;letter-spacing:0.461px;font-weight:700;">View</span>
<svg style="left:362px;top:767px;" width="12" height="6" viewBox="0 0 12 6"><polygon points="0,0 12,0 6,6" fill="#d0d2d6"/></svg>
<div style="left:96.5px;top:788px;width:289.5px;height:154.7px;background:#2d3340;"></div>
<div style="left:98.3px;top:788px;width:125.7px;height:29px;background:#3b4453;"></div>
<div style="left:226px;top:788px;width:158.3px;height:29px;background:#3b4453;"></div>
<span class="t" style="left:107.00px;top:794.79px;font-size:17.5px;color:#e6e8ec;letter-spacing:-0.524px;">Center X</span>
<span class="t" style="left:230.40px;top:795.79px;font-size:17.5px;color:#9299a5;letter-spacing:-0.089px;">1088.7540</span>
<div style="left:98.3px;top:819px;width:125.7px;height:29px;background:#3b4453;"></div>
<div style="left:226px;top:819px;width:158.3px;height:29px;background:#3b4453;"></div>
<span class="t" style="left:107.00px;top:825.79px;font-size:17.5px;color:#e6e8ec;letter-spacing:-0.680px;">Center Y</span>
<span class="t" style="left:230.00px;top:826.79px;font-size:17.5px;color:#9299a5;letter-spacing:-0.083px;">270.8125</span>
<div style="left:98.3px;top:850px;width:125.7px;height:29px;background:#3b4453;"></div>
<div style="left:226px;top:850px;width:158.3px;height:29px;background:#3b4453;"></div>
<span class="t" style="left:107.00px;top:856.79px;font-size:17.5px;color:#e6e8ec;letter-spacing:-0.495px;">Center Z</span>
<span class="t" style="left:230.00px;top:857.79px;font-size:17.5px;color:#9299a5;letter-spacing:-0.222px;">0.0000</span>
<div style="left:98.3px;top:881px;width:125.7px;height:29px;background:#3b4453;"></div>
<div style="left:226px;top:881px;width:158.3px;height:29px;background:#3b4453;"></div>
<span class="t" style="left:107.00px;top:887.79px;font-size:17.5px;color:#e6e8ec;letter-spacing:0.282px;">Height</span>
<span class="t" style="left:230.40px;top:888.79px;font-size:17.5px;color:#9299a5;letter-spacing:-0.189px;">1602.9333</span>
<div style="left:98.3px;top:912px;width:125.7px;height:29px;background:#3b4453;"></div>
<div style="left:226px;top:912px;width:158.3px;height:29px;background:#3b4453;"></div>
<span class="t" style="left:106.60px;top:918.79px;font-size:17.5px;color:#e6e8ec;letter-spacing:0.472px;">Width</span>
<span class="t" style="left:230.00px;top:919.79px;font-size:17.5px;color:#9299a5;letter-spacing:-0.089px;">3406.8989</span>
<div style="left:70px;top:946.6px;width:316px;height:33px;background:#2d3340;"></div>
<span class="t" style="left:80.30px;top:955.29px;font-size:17.5px;color:#ffffff;letter-spacing:-0.295px;font-weight:700;">Misc</span>
<svg style="left:362px;top:958.6px;" width="12" height="6" viewBox="0 0 12 6"><polygon points="0,0 12,0 6,6" fill="#d0d2d6"/></svg>
<div style="left:96.5px;top:979.6px;width:289.5px;height:98.39999999999998px;background:#2d3340;"></div>
<div style="left:98.3px;top:979.6px;width:125.7px;height:29px;background:#3b4453;"></div>
<div style="left:226px;top:979.6px;width:158.3px;height:29px;background:#3b4453;"></div>
<span class="t" style="left:107.00px;top:986.39px;font-size:17.5px;color:#e6e8ec;letter-spacing:0.477px;">Annotation...</span>
<span class="t" style="left:231.00px;top:987.39px;font-size:17.5px;color:#f2f3f5;letter-spacing:-1.454px;">1:1</span>
<div style="left:98.3px;top:1010.6px;width:125.7px;height:29px;background:#3b4453;"></div>
<div style="left:226px;top:1010.6px;width:158.3px;height:29px;background:#3b4453;"></div>
<span class="t" style="left:107.00px;top:1017.39px;font-size:17.5px;color:#e6e8ec;letter-spacing:-0.350px;">UCS icon On</span>
<span class="t" style="left:230.40px;top:1018.39px;font-size:17.5px;color:#f2f3f5;letter-spacing:-1.481px;">Yes</span>
<div style="left:98.3px;top:1041.6px;width:125.7px;height:29px;background:#3b4453;"></div>
<div style="left:226px;top:1041.6px;width:158.3px;height:29px;background:#3b4453;"></div>
<span class="t" style="left:107.00px;top:1048.39px;font-size:17.5px;color:#e6e8ec;letter-spacing:-0.197px;">UCS icon at...</span>
<span class="t" style="left:231.00px;top:1049.39px;font-size:17.5px;color:#f2f3f5;letter-spacing:0.646px;">No</span>
<div style="left:98.3px;top:1072.6px;width:125.7px;height:5.400000000000091px;background:#3b4453;"></div>
<div style="left:226px;top:1072.6px;width:158.3px;height:5.400000000000091px;background:#3b4453;"></div>
<div style="left:230px;top:377.5px;width:19px;height:18.5px;background:#fff;border:1.5px solid #d8d8d8;"></div>
<div style="left:230px;top:449.2px;width:72px;height:1.8px;background:#f2f3f5;"></div>
<div style="left:230px;top:511.2px;width:72px;height:1.8px;background:#f2f3f5;"></div>
<span class="t" style="left:20.6px;top:995.6px;font-size:18.6px;color:#c6c9cf;transform:translate(-50%,-50%) rotate(-90deg) scaleX(0.795);">PROPERTIES</span>
<svg style="left:0px;top:270px;" width="420" height="830" viewBox="0 270 420 830"><path d="M15.8,287.2 L26.2,297 M26.2,287.2 L15.8,297" stroke="#c4c6cb" stroke-width="3.2" fill="none"/><rect x="14.9" y="314" width="1.3" height="15.2" fill="#c4c6cb"/><rect x="15" y="316.3" width="3.3" height="10.2" fill="#c4c6cb"/><polygon points="21,321.6 27.2,316.2 27.2,327" fill="#c4c6cb"/><rect x="13.9" y="349.3" width="15.2" height="2.4" fill="#c4c6cb" transform="rotate(0 21.5 350.5)"/><rect x="13.9" y="349.3" width="15.2" height="2.4" fill="#c4c6cb" transform="rotate(45 21.5 350.5)"/><rect x="13.9" y="349.3" width="15.2" height="2.4" fill="#c4c6cb" transform="rotate(90 21.5 350.5)"/><rect x="13.9" y="349.3" width="15.2" height="2.4" fill="#c4c6cb" transform="rotate(135 21.5 350.5)"/><circle cx="21.5" cy="350.5" r="4.4" fill="#c4c6cb"/><circle cx="21.5" cy="350.5" r="2.1" fill="#2d3340"/><rect x="300" y="307" width="13" height="12.8" fill="#8ccdfb"/><rect x="307.2" y="314.6" width="14.4" height="13.8" fill="#3b4453"/><rect x="307.9" y="315.2" width="13" height="12.6" fill="#8ccdfb"/><path d="M318.5,303.8 V315 M313,309.4 H324" stroke="#3b4453" stroke-width="4.6"/><path d="M318.5,304 V314.8 M313.2,309.4 H323.8" stroke="#5fd487" stroke-width="3.1"/><rect x="332.5" y="304.9" width="18" height="13.6" fill="none" stroke="#5fd487" stroke-width="1.3" stroke-dasharray="3,1.6"/><rect x="334.4" y="306.6" width="14.4" height="10.2" fill="#82d9a1"/><polygon points="346.7,313.2 346.7,326 349.6,323.2 351.9,328.4 354,327.4 351.8,322.4 355.8,322.2" fill="#f4f4f4" stroke="#3b4453" stroke-width="0.8"/><polygon points="373.6,304 367.6,310.6 371.6,311 369,316.4 378,309 373.4,308.4 376,304.8" fill="#f6c866"/><rect x="374" y="314" width="14" height="13.8" fill="#f6f6f6"/><rect x="376.6" y="316.90000000000003" width="1.8" height="1.8" fill="#1f7fe0"/><rect x="379.6" y="317.2" width="6" height="1.2" fill="#1f7fe0"/><rect x="376.6" y="320.5" width="1.8" height="1.8" fill="#1f7fe0"/><rect x="379.6" y="320.79999999999995" width="6" height="1.2" fill="#1f7fe0"/><rect x="376.6" y="324.1" width="1.8" height="1.8" fill="#1f7fe0"/><rect x="379.6" y="324.4" width="6" height="1.2" fill="#1f7fe0"/><polygon points="364,310.8 364,324.4 367,321.6 369.4,327 371.6,326 369.2,320.8 373.4,320.6" fill="#ffffff" stroke="#3b4453" stroke-width="0.8"/><rect x="12" y="1059" width="18" height="24" fill="#dddddd" stroke="#f0f0f0" stroke-width="0.8"/><rect x="13.2" y="1060.3" width="13.8" height="10.6" fill="#222833"/><rect x="14.2" y="1061.3" width="11.8" height="8.6" fill="#8ccdfb"/><path d="M14,1074.5 H27 M14,1079.5 H27 M17.5,1073 V1076 M23.4,1078 V1081" stroke="#5a5a5a" stroke-width="1"/></svg>
<svg style="left:412px;top:275px;will-change:transform;" width="963" height="836" viewBox="412 275 963 836"><path d="M1115.71,642.75 Q1115.87,645.50 1118.50,646.03 L1137.16,649.38 Q1138.17,649.64 1138.22,651.11 A337.4,337.4 0 0 1 1138.22,672.89 Q1138.17,674.36 1137.16,674.62 L1118.50,677.97 Q1115.87,678.50 1115.71,681.25 A315.3,315.3 0 0 1 1114.85,692.22 Q1114.57,694.96 1117.09,695.89 L1135.00,702.12 Q1135.96,702.53 1135.78,704.00 A337.4,337.4 0 0 1 1132.37,725.51 Q1132.09,726.96 1131.05,727.05 L1112.09,727.44 Q1109.41,727.55 1108.83,730.24 A315.3,315.3 0 0 1 1106.26,740.94 Q1105.56,743.61 1107.89,744.92 L1124.61,753.88 Q1125.49,754.43 1125.09,755.85 A337.4,337.4 0 0 1 1118.35,776.57 Q1117.85,777.95 1116.81,777.88 L1098.02,775.30 Q1095.36,774.99 1094.36,777.56 A315.3,315.3 0 0 1 1090.15,787.73 Q1089.04,790.24 1091.14,791.91 L1106.25,803.37 Q1107.04,804.06 1106.41,805.39 A337.4,337.4 0 0 1 1096.52,824.80 Q1095.81,826.09 1094.79,825.86 L1076.64,820.37 Q1074.06,819.65 1072.67,822.03 A315.3,315.3 0 0 1 1066.92,831.41 Q1065.43,833.72 1067.25,835.70 L1080.38,849.38 Q1081.05,850.18 1080.22,851.40 A337.4,337.4 0 0 1 1067.42,869.03 Q1066.51,870.19 1065.54,869.80 L1048.47,861.54 Q1046.03,860.42 1044.29,862.56 A315.3,315.3 0 0 1 1037.15,870.92 Q1035.31,872.98 1036.80,875.21 L1047.63,890.78 Q1048.16,891.68 1047.16,892.75 A337.4,337.4 0 0 1 1031.75,908.16 Q1030.68,909.16 1029.78,908.63 L1014.21,897.80 Q1011.98,896.31 1009.92,898.15 A315.3,315.3 0 0 1 1001.56,905.29 Q999.42,907.03 1000.54,909.47 L1008.80,926.54 Q1009.19,927.51 1008.03,928.42 A337.4,337.4 0 0 1 990.40,941.22 Q989.18,942.05 988.38,941.38 L974.70,928.25 Q972.72,926.43 970.41,927.92 A315.3,315.3 0 0 1 961.03,933.67 Q958.65,935.06 959.37,937.64 L964.86,955.79 Q965.09,956.81 963.80,957.52 A337.4,337.4 0 0 1 944.39,967.41 Q943.06,968.04 942.37,967.25 L930.91,952.14 Q929.24,950.04 926.73,951.15 A315.3,315.3 0 0 1 916.56,955.36 Q913.99,956.36 914.30,959.02 L916.88,977.81 Q916.95,978.85 915.57,979.35 A337.4,337.4 0 0 1 894.85,986.09 Q893.43,986.49 892.88,985.61 L883.92,968.89 Q882.61,966.56 879.94,967.26 A315.3,315.3 0 0 1 869.24,969.83 Q866.55,970.41 866.44,973.09 L866.05,992.05 Q865.96,993.09 864.51,993.37 A337.4,337.4 0 0 1 843.00,996.78 Q841.53,996.96 841.12,996.00 L834.89,978.09 Q833.96,975.57 831.22,975.85 A315.3,315.3 0 0 1 820.25,976.71 Q817.50,976.87 816.97,979.50 L813.62,998.16 Q813.36,999.17 811.89,999.22 A337.4,337.4 0 0 1 790.11,999.22 Q788.64,999.17 788.38,998.16 L785.03,979.50 Q784.50,976.87 781.75,976.71 A315.3,315.3 0 0 1 770.78,975.85 Q768.04,975.57 767.11,978.09 L760.88,996.00 Q760.47,996.96 759.00,996.78 A337.4,337.4 0 0 1 737.49,993.37 Q736.04,993.09 735.95,992.05 L735.56,973.09 Q735.45,970.41 732.76,969.83 A315.3,315.3 0 0 1 722.06,967.26 Q719.39,966.56 718.08,968.89 L709.12,985.61 Q708.57,986.49 707.15,986.09 A337.4,337.4 0 0 1 686.43,979.35 Q685.05,978.85 685.12,977.81 L687.70,959.02 Q688.01,956.36 685.44,955.36 A315.3,315.3 0 0 1 675.27,951.15 Q672.76,950.04 671.09,952.14 L659.63,967.25 Q658.94,968.04 657.61,967.41 A337.4,337.4 0 0 1 638.20,957.52 Q636.91,956.81 637.14,955.79 L642.63,937.64 Q643.35,935.06 640.97,933.67 A315.3,315.3 0 0 1 631.59,927.92 Q629.28,926.43 627.30,928.25 L613.62,941.38 Q612.82,942.05 611.60,941.22 A337.4,337.4 0 0 1 593.97,928.42 Q592.81,927.51 593.20,926.54 L601.46,909.47 Q602.58,907.03 600.44,905.29 A315.3,315.3 0 0 1 592.08,898.15 Q590.02,896.31 587.79,897.80 L572.22,908.63 Q571.32,909.16 570.25,908.16 A337.4,337.4 0 0 1 554.84,892.75 Q553.84,891.68 554.37,890.78 L565.20,875.21 Q566.69,872.98 564.85,870.92 A315.3,315.3 0 0 1 557.71,862.56 Q555.97,860.42 553.53,861.54 L536.46,869.80 Q535.49,870.19 534.58,869.03 A337.4,337.4 0 0 1 521.78,851.40 Q520.95,850.18 521.62,849.38 L534.75,835.70 Q536.57,833.72 535.08,831.41 A315.3,315.3 0 0 1 529.33,822.03 Q527.94,819.65 525.36,820.37 L507.21,825.86 Q506.19,826.09 505.48,824.80 A337.4,337.4 0 0 1 495.59,805.39 Q494.96,804.06 495.75,803.37 L510.86,791.91 Q512.96,790.24 511.85,787.73 A315.3,315.3 0 0 1 507.64,777.56 Q506.64,774.99 503.98,775.30 L485.19,777.88 Q484.15,777.95 483.65,776.57 A337.4,337.4 0 0 1 476.91,755.85 Q476.51,754.43 477.39,753.88 L494.11,744.92 Q496.44,743.61 495.74,740.94 A315.3,315.3 0 0 1 493.17,730.24 Q492.59,727.55 489.91,727.44 L470.95,727.05 Q469.91,726.96 469.63,725.51 A337.4,337.4 0 0 1 466.22,704.00 Q466.04,702.53 467.00,702.12 L484.91,695.89 Q487.43,694.96 487.15,692.22 A315.3,315.3 0 0 1 486.29,681.25 Q486.13,678.50 483.50,677.97 L464.84,674.62 Q463.83,674.36 463.78,672.89 A337.4,337.4 0 0 1 463.78,651.11 Q463.83,649.64 464.84,649.38 L483.50,646.03 Q486.13,645.50 486.29,642.75 A315.3,315.3 0 0 1 487.15,631.78 Q487.43,629.04 484.91,628.11 L467.00,621.88 Q466.04,621.47 466.22,620.00 A337.4,337.4 0 0 1 469.63,598.49 Q469.91,597.04 470.95,596.95 L489.91,596.56 Q492.59,596.45 493.17,593.76 A315.3,315.3 0 0 1 495.74,583.06 Q496.44,580.39 494.11,579.08 L477.39,570.12 Q476.51,569.57 476.91,568.15 A337.4,337.4 0 0 1 483.65,547.43 Q484.15,546.05 485.19,546.12 L503.98,548.70 Q506.64,549.01 507.64,546.44 A315.3,315.3 0 0 1 511.85,536.27 Q512.96,533.76 510.86,532.09 L495.75,520.63 Q494.96,519.94 495.59,518.61 A337.4,337.4 0 0 1 505.48,499.20 Q506.19,497.91 507.21,498.14 L525.36,503.63 Q527.94,504.35 529.33,501.97 A315.3,315.3 0 0 1 535.08,492.59 Q536.57,490.28 534.75,488.30 L521.62,474.62 Q520.95,473.82 521.78,472.60 A337.4,337.4 0 0 1 534.58,454.97 Q535.49,453.81 536.46,454.20 L553.53,462.46 Q555.97,463.58 557.71,461.44 A315.3,315.3 0 0 1 564.85,453.08 Q566.69,451.02 565.20,448.79 L554.37,433.22 Q553.84,432.32 554.84,431.25 A337.4,337.4 0 0 1 570.25,415.84 Q571.32,414.84 572.22,415.37 L587.79,426.20 Q590.02,427.69 592.08,425.85 A315.3,315.3 0 0 1 600.44,418.71 Q602.58,416.97 601.46,414.53 L593.20,397.46 Q592.81,396.49 593.97,395.58 A337.4,337.4 0 0 1 611.60,382.78 Q612.82,381.95 613.62,382.62 L627.30,395.75 Q629.28,397.57 631.59,396.08 A315.3,315.3 0 0 1 640.97,390.33 Q643.35,388.94 642.63,386.36 L637.14,368.21 Q636.91,367.19 638.20,366.48 A337.4,337.4 0 0 1 657.61,356.59 Q658.94,355.96 659.63,356.75 L671.09,371.86 Q672.76,373.96 675.27,372.85 A315.3,315.3 0 0 1 685.44,368.64 Q688.01,367.64 687.70,364.98 L685.12,346.19 Q685.05,345.15 686.43,344.65 A337.4,337.4 0 0 1 707.15,337.91 Q708.57,337.51 709.12,338.39 L718.08,355.11 Q719.39,357.44 722.06,356.74 A315.3,315.3 0 0 1 732.76,354.17 Q735.45,353.59 735.56,350.91 L735.95,331.95 Q736.04,330.91 737.49,330.63 A337.4,337.4 0 0 1 759.00,327.22 Q760.47,327.04 760.88,328.00 L767.11,345.91 Q768.04,348.43 770.78,348.15 A315.3,315.3 0 0 1 781.75,347.29 Q784.50,347.13 785.03,344.50 L788.38,325.84 Q788.64,324.83 790.11,324.78 A337.4,337.4 0 0 1 811.89,324.78 Q813.36,324.83 813.62,325.84 L816.97,344.50 Q817.50,347.13 820.25,347.29 A315.3,315.3 0 0 1 831.22,348.15 Q833.96,348.43 834.89,345.91 L841.12,328.00 Q841.53,327.04 843.00,327.22 A337.4,337.4 0 0 1 864.51,330.63 Q865.96,330.91 866.05,331.95 L866.44,350.91 Q866.55,353.59 869.24,354.17 A315.3,315.3 0 0 1 879.94,356.74 Q882.61,357.44 883.92,355.11 L892.88,338.39 Q893.43,337.51 894.85,337.91 A337.4,337.4 0 0 1 915.57,344.65 Q916.95,345.15 916.88,346.19 L914.30,364.98 Q913.99,367.64 916.56,368.64 A315.3,315.3 0 0 1 926.73,372.85 Q929.24,373.96 930.91,371.86 L942.37,356.75 Q943.06,355.96 944.39,356.59 A337.4,337.4 0 0 1 963.80,366.48 Q965.09,367.19 964.86,368.21 L959.37,386.36 Q958.65,388.94 961.03,390.33 A315.3,315.3 0 0 1 970.41,396.08 Q972.72,397.57 974.70,395.75 L988.38,382.62 Q989.18,381.95 990.40,382.78 A337.4,337.4 0 0 1 1008.03,395.58 Q1009.19,396.49 1008.80,397.46 L1000.54,414.53 Q999.42,416.97 1001.56,418.71 A315.3,315.3 0 0 1 1009.92,425.85 Q1011.98,427.69 1014.21,426.20 L1029.78,415.37 Q1030.68,414.84 1031.75,415.84 A337.4,337.4 0 0 1 1047.16,431.25 Q1048.16,432.32 1047.63,433.22 L1036.80,448.79 Q1035.31,451.02 1037.15,453.08 A315.3,315.3 0 0 1 1044.29,461.44 Q1046.03,463.58 1048.47,462.46 L1065.54,454.20 Q1066.51,453.81 1067.42,454.97 A337.4,337.4 0 0 1 1080.22,472.60 Q1081.05,473.82 1080.38,474.62 L1067.25,488.30 Q1065.43,490.28 1066.92,492.59 A315.3,315.3 0 0 1 1072.67,501.97 Q1074.06,504.35 1076.64,503.63 L1094.79,498.14 Q1095.81,497.91 1096.52,499.20 A337.4,337.4 0 0 1 1106.41,518.61 Q1107.04,519.94 1106.25,520.63 L1091.14,532.09 Q1089.04,533.76 1090.15,536.27 A315.3,315.3 0 0 1 1094.36,546.44 Q1095.36,549.01 1098.02,548.70 L1116.81,546.12 Q1117.85,546.05 1118.35,547.43 A337.4,337.4 0 0 1 1125.09,568.15 Q1125.49,569.57 1124.61,570.12 L1107.89,579.08 Q1105.56,580.39 1106.26,583.06 A315.3,315.3 0 0 1 1108.83,593.76 Q1109.41,596.45 1112.09,596.56 L1131.05,596.95 Q1132.09,597.04 1132.37,598.49 A337.4,337.4 0 0 1 1135.78,620.00 Q1135.96,621.47 1135.00,621.88 L1117.09,628.11 Q1114.57,629.04 1114.85,631.78 A315.3,315.3 0 0 1 1115.71,642.75 Z" fill="none" stroke="#fff" stroke-width="1" shape-rendering="crispEdges" stroke-linejoin="round"/><circle cx="801.5" cy="662" r="311.8" fill="none" stroke="#fff" stroke-width="1" shape-rendering="crispEdges"/><circle cx="800" cy="662.1" r="236.5" fill="none" stroke="#fff" stroke-width="1" shape-rendering="crispEdges"/><circle cx="800" cy="662.3" r="233.0" fill="none" stroke="#fff" stroke-width="1" shape-rendering="crispEdges"/><defs><path id="t1" d="M553.00,662.00 A248.00,248.00 0 0 1 1049.00,662.00"/><path id="t2" d="M614.00,662.00 A187.00,187.00 0 0 1 988.00,662.00"/><path id="t3" d="M510.00,662.00 A291.00,291.00 0 0 0 1092.00,662.00"/><path id="t4" d="M587.00,662.00 A214.00,214.00 0 0 0 1015.00,662.00"/></defs><text fill="none" stroke="#fff" stroke-width="1.05" font-family="'Liberation Serif',serif" font-size="66.6"><textPath href="#t1" startOffset="160.6" textLength="179.2" lengthAdjust="spacingAndGlyphs">JOHN</textPath></text><text fill="none" stroke="#fff" stroke-width="1.05" font-family="'Liberation Serif',serif" font-size="66.6"><textPath href="#t1" startOffset="365.3" textLength="78.8" lengthAdjust="spacingAndGlyphs">M.</textPath></text><text fill="none" stroke="#fff" stroke-width="1.05" font-family="'Liberation Serif',serif" font-size="66.6"><textPath href="#t1" startOffset="470.1" textLength="142.8" lengthAdjust="spacingAndGlyphs">DOE</textPath></text><text fill="none" stroke="#fff" stroke-width="1.05" font-family="'Liberation Serif',serif" font-size="48.0"><textPath href="#t2" startOffset="19.6" textLength="141.6" lengthAdjust="spacingAndGlyphs">STATE</textPath></text><text fill="none" stroke="#fff" stroke-width="1.05" font-family="'Liberation Serif',serif" font-size="48.0"><textPath href="#t2" startOffset="174.0" textLength="62.7" lengthAdjust="spacingAndGlyphs">OF</textPath></text><text fill="none" stroke="#fff" stroke-width="1.05" font-family="'Liberation Serif',serif" font-size="48.0"><textPath href="#t2" startOffset="247.1" textLength="322.5" lengthAdjust="spacingAndGlyphs">WASHINGTON</textPath></text><text fill="none" stroke="#fff" stroke-width="1.05" font-family="'Liberation Serif',serif" font-size="66.6"><textPath href="#t3" startOffset="5.6" textLength="515.5" lengthAdjust="spacing">PROFESSIONAL</textPath></text><text fill="none" stroke="#fff" stroke-width="1.05" font-family="'Liberation Serif',serif" font-size="66.6"><textPath href="#t3" startOffset="543.4" textLength="365.2" lengthAdjust="spacing">ENGINEER</textPath></text><text fill="none" stroke="#fff" stroke-width="1.05" font-family="'Liberation Serif',serif" font-size="47.0"><textPath href="#t4" startOffset="174.1" textLength="324.2" lengthAdjust="spacing">REGISTERED</textPath></text><text fill="none" stroke="#fff" stroke-width="1.05" font-family="'Liberation Serif',serif" font-size="62.5" x="799.8" y="781" text-anchor="middle" letter-spacing="0.65">1223133</text><path d="M743.2,541.4 L743.0,536.0 L744.3,531.2 L747.0,526.9 L750.8,522.5 L754.0,518.2 L758.9,514.4 L763.7,510.7 L768.0,507.4 L774.5,504.7 L779.9,502.0 L785.3,500.2 L791.8,499.9 L798.3,500.2 L803.7,501.7 L810.2,503.9 L815.6,505.8 L800.0,501.5 L805.4,503.1 L811.9,505.3 L821.6,510.7 L831.3,515.0 L837.8,520.4 L844.3,524.7 L849.7,530.6 L851.3,538.2 L852.9,545.8 L855.6,550.1 L855.3,553.3 L853.5,554.9 L853.5,558.7 L856.2,561.1 L860.5,562.5 L864.8,564.7 L866.8,568.4 L867.5,571.7 L870.7,572.8 L871.8,574.9 L870.7,579.2 L867.0,584.1 L863.7,587.3 L859.9,591.1 L856.7,593.8 L852.9,596.5 L848.6,598.5 L843.2,598.7 L841.6,601.9 L838.3,603.0 L839.4,607.3 L839.1,613.8 L840.0,605.0 L839.7,612.0 L837.6,612.8 L837.3,615.3 L840.5,621.2 L843.2,628.2 L849.7,628.5 L851.8,635.2 L854.5,643.9 L856.7,650.4 L858.9,654.1 L864.8,656.8 L871.3,661.2 L882.6,667.1 L888.6,672.5 L892.3,677.4 L897.7,682.6 L895.0,688.2 L890.2,694.6 L883.7,701.7 L878.8,707.1 L873.4,712.5 L867.0,718.4 L800.0,718.6 L796.7,718.6 M743.2,541.4 L747.0,538.7 L748.1,532.8 L749.7,529.6 L752.9,525.2 L755.6,521.5 L759.4,518.8 L763.7,515.0 L768.0,512.3 L772.4,510.7 L775.6,510.7 L777.2,512.3 L783.2,512.5 L783.7,509.0 L779.9,508.0 L778.3,505.8 L781.0,504.5 L786.4,503.4 L791.8,502.8 L798.3,503.1 L803.7,505.3 L809.1,506.9 L812.3,508.0 L814.5,512.3 L817.2,519.3 L816.7,516.1 L817.3,519.8 L821.6,521.5 L826.5,526.3 L826.5,530.1 L820.0,534.4 L817.8,538.2 L814.0,540.9 L808.6,541.7 L803.2,539.8 L800.0,538.2 L801.0,538.2 L799.9,542.5 L799.2,545.8 L801.5,549.0 L802.1,553.3 L803.7,557.1 L804.8,560.9 L804.2,562.8 L800.5,562.8 L796.1,560.3 L791.8,558.2 L787.5,556.8 L782.1,556.4 L776.7,557.4 L773.4,559.8 L770.7,563.0 L769.1,567.4 L767.5,572.8 L766.8,579.2 L766.4,585.7 L767.0,590.0 L768.6,591.7 L770.7,589.0 L772.9,586.8 L771.3,585.7 L770.0,582.5 L770.2,578.2 L771.8,574.9 L776.1,572.8 L775.6,570.6 L773.4,568.4 L774.0,566.8 L776.7,564.1 L779.4,560.9 L784.2,560.3 L788.6,561.1 L791.8,562.5 L793.8,564.1 L793.4,566.8 L786.4,566.5 L782.6,567.6 L781.5,569.0 L785.3,569.5 L789.6,570.1 L792.9,572.6 L794.5,571.7 L796.1,569.5 L796.7,567.2 L801.5,567.2 L806.4,567.9 L809.6,569.5 L810.7,572.8 L810.2,579.2 L809.1,585.7 L808.0,592.2 L806.4,598.7 L804.8,605.2 L803.2,611.7 L805.3,605.0 L804.2,612.6 L801.5,618.0 L797.2,622.3 L792.9,624.4 L789.6,628.5 L784.2,630.9 L779.9,633.6 L776.7,636.3 L771.3,636.5 L764.8,636.3 L758.9,635.0 L755.1,632.0 L751.8,626.6 L748.6,621.2 L745.9,615.8 L743.7,609.3 L742.7,605.0 L744.3,608.4 L742.7,601.9 L741.0,594.4 L740.0,587.9 L739.4,582.5 L737.3,580.9 L735.4,578.2 L736.7,574.4 L736.2,572.2 L733.5,573.8 L730.2,576.5 L727.5,576.0 L728.1,572.8 L730.8,567.4 L733.5,562.0 L736.2,556.6 L738.3,552.2 L741.0,547.9 L743.2,545.2 L746.4,544.1 L745.9,547.9 L744.3,552.2 L743.7,557.6 L743.7,559.6 M786.4,509.0 L789.6,508.2 L795.0,508.2 L800.5,508.5 L803.7,510.1 L806.4,512.8 L808.0,515.5 L811.3,517.7 L813.4,520.4 L813.4,523.6 L811.3,523.6 L811.3,520.9 L808.0,519.3 L804.2,518.2 L801.5,517.7 L801.5,514.4 L799.9,512.3 L795.0,511.2 L789.6,510.7 L786.4,509.0 M775.6,589.0 L777.2,590.0 L779.4,593.3 L779.7,596.5 L777.8,599.2 L774.5,601.4 L770.2,603.0 L765.9,603.3 L761.6,602.5 L757.8,600.3 L755.6,597.6 L755.3,595.5 L757.2,594.9 L759.4,596.5 L762.1,597.1 L764.3,596.0 L765.3,593.5 L767.0,594.9 L769.7,596.5 L773.4,596.5 L775.1,594.9 L775.1,591.7 L775.6,589.0 M752.9,613.1 L755.1,611.5 L760.5,610.9 L764.8,612.6 L769.1,610.4 L777.8,610.2 L784.2,611.7 L785.9,613.4 L784.2,614.5 L755.1,614.7 L752.9,613.1 M743.2,569.5 L742.3,564.1 L742.1,559.8 L745.4,559.3 L750.8,559.5 L754.5,559.6 L757.2,561.1 L760.5,562.8 L762.6,565.2 L762.1,567.2 L759.4,567.6 L757.2,565.4 L754.5,563.6 L751.8,562.5 L748.6,562.8 L745.9,564.7 L744.3,567.4 L743.2,569.5 M746.4,572.8 L746.2,569.5 L748.6,567.9 L751.8,567.2 L755.1,567.2 L757.8,568.4 L758.9,570.1 L756.2,572.8 L754.5,571.1 L751.8,570.6 L749.7,570.6 L748.6,572.6 L746.4,572.8 M740.5,543.4 L737.8,544.1 L734.6,547.4 L732.9,552.2 L730.2,558.7 L727.5,565.2 L725.4,570.6 L722.9,576.0 L721.9,581.4 L723.2,583.6 L725.9,585.2 L729.2,584.6 L732.4,583.0 L735.1,582.3 L736.7,583.0 L736.2,585.7 L733.5,588.4 L729.7,590.6 L725.9,590.6 L722.7,588.4 L721.1,585.7 L719.4,585.2 L719.2,587.9 L720.0,592.2 L722.1,595.5 L725.4,597.4 L729.7,597.6 L732.4,597.8 L732.4,601.9 L734.6,605.2 L737.8,607.3 L740.5,609.5 L741.6,613.8 L735.1,605.0 L737.3,607.2 L740.0,608.8 L741.6,613.6 L742.7,618.0 L744.8,622.8 L747.5,627.7 L751.8,632.5 L756.2,637.2 L760.5,639.0 L766.4,640.9 L769.1,643.9 L771.3,647.1 L775.6,650.9 L779.9,653.6 L785.3,656.0 L790.7,657.9 L795.6,658.5 L798.3,660.1 L797.7,661.7 L794.0,662.2 L792.3,663.9 L795.0,665.3 L799.4,665.7 L801.5,667.1 L801.0,669.8 L797.2,670.7 L791.8,671.1 L788.0,672.0 L789.1,673.6 L794.0,674.1 L797.7,675.2 L799.4,678.4 L802.1,676.8 L806.4,673.6 L810.2,670.9 L810.4,665.5 L809.1,659.0 L813.4,654.1 L817.2,649.3 L820.0,645.5 L823.2,639.6 L827.0,632.0 L829.7,621.2 L831.3,611.5 L831.9,605.0 L830.8,613.8 L830.2,605.2 L831.3,603.0 L832.9,607.3 L834.0,613.8 L832.4,605.0 L834.6,613.6 L834.0,621.2 L831.9,634.2 L827.0,641.7 L822.1,649.3 L816.2,654.7 L814.6,657.4 L814.6,676.8 L811.3,679.5 L807.0,685.5 L804.3,691.4 L802.2,699.0 L800.5,706.5 L800.5,704.4 L798.3,711.4 L796.7,718.6 M740.5,543.4 L740.8,545.2 L737.8,549.0 L735.6,554.4 L734.0,559.8 L734.3,565.2 L735.4,567.6 L736.7,565.2 L737.6,560.9 L738.9,556.6 L740.2,554.4 L741.6,554.4 L741.6,558.7 L742.3,564.1 M808.6,557.6 L813.5,557.4 L817.3,560.9 L823.2,564.1 L831.9,565.0 L832.4,562.0 L831.3,559.8 L832.9,558.2 L837.8,556.6 L842.7,557.4 L842.7,563.0 L839.4,564.1 L838.3,566.8 L838.3,572.2 L840.5,574.7 L843.2,572.8 L843.2,566.8 L845.4,565.2 L850.8,563.6 L855.1,564.7 L856.7,566.8 L856.2,570.6 L854.0,572.8 L853.5,578.2 L849.7,579.2 L842.7,579.8 L842.1,585.2 L837.8,585.5 L835.1,584.1 L833.5,580.9 L830.2,578.7 L826.5,576.0 L822.7,573.3 L820.0,571.7 L818.4,572.2 L820.0,574.9 L823.8,578.2 L827.5,581.4 L829.4,584.1 L828.6,585.5 L825.4,585.2 L822.7,582.5 L820.5,579.8 L818.9,579.8 L818.9,581.9 L821.6,585.2 L824.8,587.9 L829.2,589.0 L832.9,590.0 L833.7,591.7 L831.3,595.5 L827.5,598.7 L823.2,600.6 L820.5,598.7 L816.7,596.0 L814.6,591.7 L813.0,586.8 L815.1,582.5 L814.0,578.2 L813.5,572.8 L813.0,568.4 L809.7,565.2 L808.1,561.4 L808.6,557.6 M760.5,642.3 L757.8,643.0 L755.6,648.2 L754.5,654.7 L754.0,661.2 L753.8,667.6 L753.5,674.1 L752.9,678.4 L750.2,682.8 L748.1,688.2 L745.4,694.6 L742.7,701.1 L741.6,707.6 L740.5,714.1 L739.1,718.4 L743.7,718.4 L744.8,714.1 L747.5,709.8 L749.7,707.1 L749.5,700.0 L750.5,692.5 L752.9,688.2 L756.2,685.5 L758.3,680.6 L759.6,676.8 L761.6,675.4 L765.9,675.4 L769.7,677.4 L772.2,675.7 L770.7,672.0 L770.2,668.7 L767.5,666.6 L764.6,664.2 L763.5,661.2 L763.5,654.7 L763.5,648.2 L762.9,644.4 L760.5,642.3 M749.7,671.4 L747.5,671.4 L742.1,674.1 L734.6,676.8 L725.9,681.1 L718.4,684.4 L716.2,687.6 L709.7,691.4 L705.9,696.8 L701.6,700.9 L704.9,704.9 L710.8,708.2 L717.8,711.9 L723.2,717.3 L725.9,718.6 L734.6,718.6 L736.2,713.0 L737.3,705.5 L739.4,696.8 L740.5,690.3 L743.7,683.8 L748.1,679.0 L749.5,675.2 L749.7,671.4 M767.0,717.3 L768.0,710.3 L770.2,709.2 L772.2,711.4 L772.4,718.6 L768.0,718.6 L767.0,717.3 M785.3,684.9 L786.4,682.2 L789.1,681.1 L791.6,681.9 L792.0,688.2 L794.0,689.8 L797.2,687.1 L799.9,684.7 L802.6,684.9 L801.5,689.2 L799.4,695.7 L796.7,703.3 L794.0,710.9 L791.8,718.6 L784.2,718.6 L784.2,715.7 L782.1,714.3 L779.9,716.3 L778.3,716.3 L778.0,710.3 L781.0,707.1 L783.7,703.8 L783.2,700.6 L781.2,699.0 L783.2,695.7 L785.3,693.6 L786.4,689.8 L785.3,687.1 L785.3,684.9 M836.2,665.5 L836.7,663.9 L838.3,663.3 L839.4,664.9 L838.9,667.1 L837.3,667.6 L836.2,665.5 M833.3,674.1 L837.3,674.1 L837.8,676.3 L833.5,676.5 L833.3,674.1 M840.5,670.3 L841.6,669.3 L842.7,670.3 L843.2,674.1 L845.9,676.8 L845.9,681.7 L844.8,682.2 L840.5,678.4 L840.5,670.3 M833.3,685.5 L835.6,684.4 L838.3,686.5 L841.0,685.1 L843.7,685.5 L845.6,688.4 L843.2,690.3 L840.5,690.5 L838.3,689.0 L836.2,687.1 L833.3,685.5 M836.5,693.0 L838.3,692.3 L841.6,693.6 L841.6,695.5 L838.3,695.5 L836.5,693.0 M809.2,713.0 L814.0,709.8 L822.1,703.5 L827.5,703.3 L827.9,706.3 L825.9,708.2 L818.9,710.3 L813.5,713.0 L813.0,715.4 L810.3,715.7 L809.2,713.0 " fill="none" stroke="#fff" stroke-width="1" shape-rendering="crispEdges" stroke-linejoin="round" stroke-linecap="round"/></svg>
</div>
</body></html>
